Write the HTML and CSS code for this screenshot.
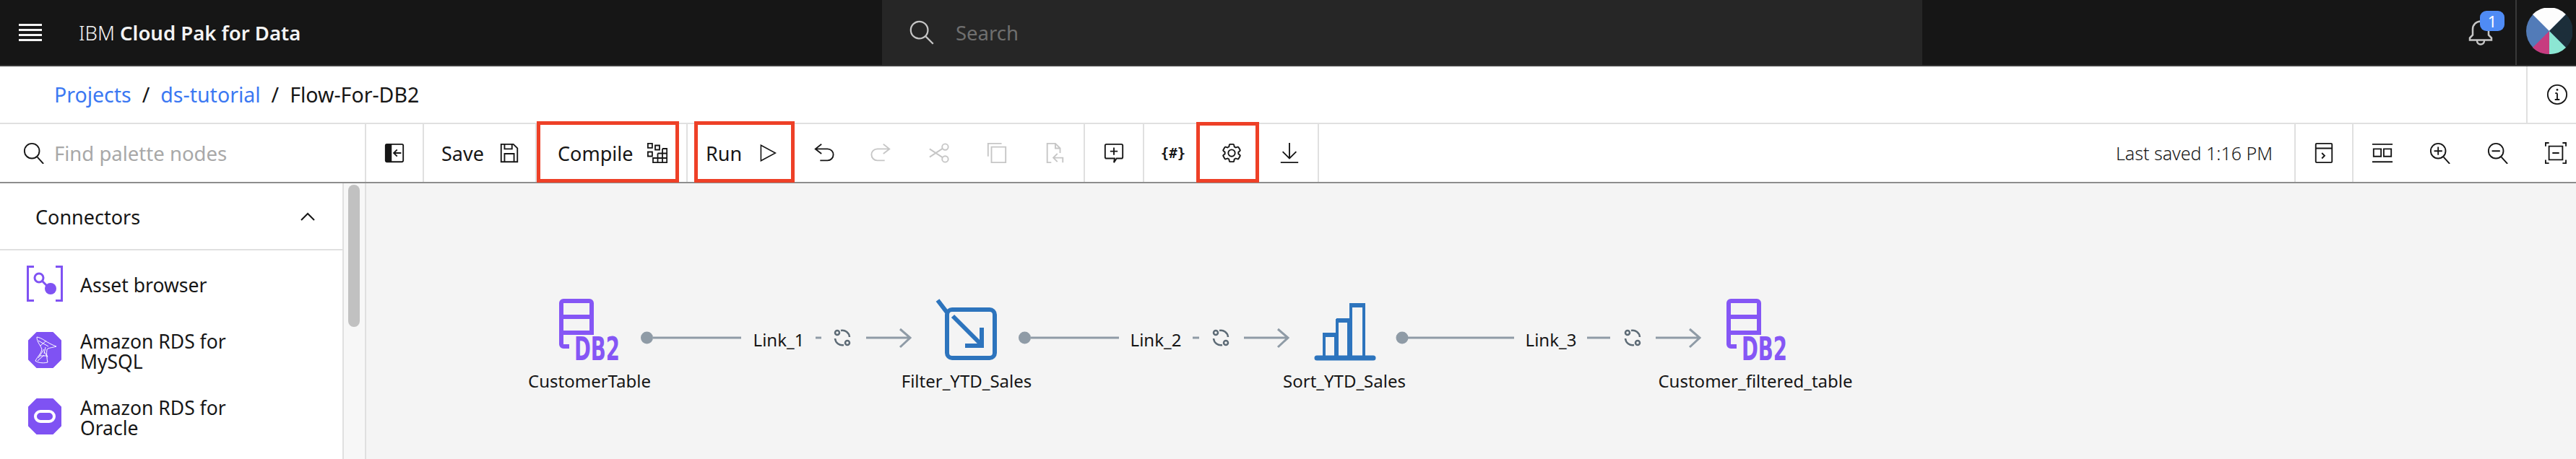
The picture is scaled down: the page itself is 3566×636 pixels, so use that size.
FILE: index.html
```html
<!DOCTYPE html>
<html lang="en">
<head>
  <meta charset="UTF-8" />
  <title>Flow-For-DB2 - IBM Cloud Pak for Data</title>
  <link rel="stylesheet" href="styles.css">
</head>
<body>
  <header class="topbar">
    <div class="brand">
      <div class="burger"><span></span><span></span><span></span><span></span></div>
      <div class="title">IBM <b>Cloud Pak for Data</b></div>
    </div>
    <div class="global-search">
      <svg class="ico ico-lg" viewBox="0 0 32 32"><circle cx="13" cy="13" r="10.5"/><path d="M21 21l9 9"/></svg>
      <span>Search</span>
    </div>
    <div class="top-right">
      <div class="bell">
        <svg class="bell-ico" viewBox="0 0 34 36"><path d="M2 28v-3l4-4v-8a11 11 0 0 1 22 0v8l4 4v3zM12 28v1a5 5 0 0 0 10 0v-1"/></svg>
        <span class="badge">1</span>
      </div>
      <div class="avatar">
        <svg viewBox="0 0 64 64">
          <circle cx="32" cy="32" r="32" fill="#527bb8"/>
          <path d="M32 32L9 9A32 32 0 0 1 55 9z" fill="#fdfdfd"/>
          <path d="M32 32L55 9A32 32 0 0 1 55 55z" fill="#1c2e3a"/>
          <path d="M32 32L55 55A32 32 0 0 1 32 64z" fill="#8ce6d3"/>
          <path d="M32 32V64A32 32 0 0 1 9 55z" fill="#c73c7f"/>
        </svg>
      </div>
    </div>
  </header>

  <nav class="crumbs">
    <div class="crumb-path">
      <a>Projects</a><i>/</i><a>ds-tutorial</a><i>/</i><span>Flow-For-DB2</span>
    </div>
    <div class="crumb-info">
      <svg class="ico" viewBox="0 0 32 32"><circle cx="16" cy="16" r="14"/><path d="M16 14v9M12.500 23.500h7M13 14h3"/><circle class="dot" cx="16" cy="9" r="1.500"/></svg>
    </div>
  </nav>

  <div class="toolbar">
    <div class="palette-search">
      <svg class="ico" viewBox="0 0 32 32"><circle cx="13" cy="13" r="11"/><path d="M21 22l9 10"/></svg>
      <span>Find palette nodes</span>
    </div>
    <button class="slot sep">
      <svg class="ico" viewBox="0 0 32 32"><rect x="3" y="3" width="26" height="26" rx="2"/><path class="solid" d="M3 3h9v26H3z"/><path d="M26 16H16M20 11l-5 5 5 5"/></svg>
    </button>
    <button class="tool save sep">Save
      <svg class="ico" viewBox="0 0 32 32"><path d="M5 3h17l6 6v20H4V3zM9 3v7h11V3M9 29V17h14v12"/></svg>
    </button>
    <button class="tool compile marked">Compile
      <svg class="ico" viewBox="0 0 28 28"><path class="fine" d="M.9.900h6v6h-6zM11 3.500h6v6h-6zM.9 12.500h6v6h-6zM21 8h6.200v19.200H8V21h19.200M21 14.500h6.200M14.500 14.500H27.200M14.500 14.500V27.200M21 8V27.200"/></svg>
    </button>
    <span class="thin-sep"></span>
    <button class="tool run marked">Run
      <svg class="ico" viewBox="0 0 30 30"><path d="M3 1.500L28 15 3 28.500z"/></svg>
    </button>
    <button class="slot">
      <svg class="ico" viewBox="0 0 32 32"><path d="M13 3L4 10l9 7M4 10h18a8 8 0 0 1 0 17H11"/></svg>
    </button>
    <button class="slot off">
      <svg class="ico" viewBox="0 0 32 32"><path d="M19 3l9 7-9 7M28 10H10a8 8 0 0 0 0 17h11"/></svg>
    </button>
    <button class="slot off">
      <svg class="ico" viewBox="0 0 32 32"><circle cx="25" cy="7" r="4.500"/><circle cx="25" cy="25" r="4.500"/><path d="M21 9.500L2 22M21 22.500L2 10"/></svg>
    </button>
    <button class="slot off">
      <svg class="ico" viewBox="0 0 32 32"><path d="M3 21V2h20M8 7h21v23H8z"/></svg>
    </button>
    <button class="slot wide off sep">
      <svg class="ico" viewBox="0 0 32 32"><path d="M11 30H5V2h12l7 7v7M17 2v7h7M28 30v-7H15M20 17l-6 6 6 6"/></svg>
    </button>
    <button class="slot wide sep">
      <svg class="ico" viewBox="0 0 32 32"><path d="M5 3h22a2 2 0 0 1 2 2v17a2 2 0 0 1-2 2h-7l-4 6 1-6H5a2 2 0 0 1-2-2V5a2 2 0 0 1 2-2zM16 8v11M10.500 13.500h11"/></svg>
    </button>
    <button class="slot params">{#}</button>
    <button class="slot wide gear">
      <svg class="ico ico-fill" viewBox="0 0 32 32"><path d="M27,16.760c0-.25,0-.5,0-.76s0-.51,0-.77l1.920-1.680A2,2,0,0,0,29.300,11L26.940,7a2,2,0,0,0-1.730-1,2,2,0,0,0-.64.1l-2.430.82a11.350,11.350,0,0,0-1.310-.75l-.51-2.520a2,2,0,0,0-2-1.610H13.640a2,2,0,0,0-2,1.610l-.51,2.520a11.480,11.480,0,0,0-1.320.75L7.430,6.060A2,2,0,0,0,6.790,6,2,2,0,0,0,5.060,7L2.700,11a2,2,0,0,0,.41,2.510L5,15.240c0,.25,0,.5,0,.76s0,.51,0,.77L3.110,18.450A2,2,0,0,0,2.700,21L5.060,25a2,2,0,0,0,1.730,1,2,2,0,0,0,.64-.1l2.430-.82a11.350,11.350,0,0,0,1.310.75l.51,2.520a2,2,0,0,0,2,1.610h4.720a2,2,0,0,0,2-1.610l.51-2.520a11.480,11.480,0,0,0,1.320-.75l2.420.82a2,2,0,0,0,.64.1,2,2,0,0,0,1.730-1L29.300,21a2,2,0,0,0-.41-2.510ZM25.210,24l-3.430-1.160a8.860,8.860,0,0,1-2.710,1.570L18.360,28H13.640l-.71-3.550a9.360,9.360,0,0,1-2.700-1.570L6.790,24,4.430,20l2.720-2.400a8.900,8.900,0,0,1,0-3.130L4.430,12,6.790,8l3.430,1.160a8.860,8.860,0,0,1,2.710-1.570L13.640,4h4.720l.71,3.550a9.360,9.360,0,0,1,2.700,1.570L25.210,8,27.570,12l-2.720,2.400a8.900,8.900,0,0,1,0,3.130L27.570,20Z"/><path d="M16,22a6,6,0,1,1,6-6A5.940,5.940,0,0,1,16,22Zm0-10a3.910,3.910,0,0,0-4,4,3.910,3.910,0,0,0,4,4,3.910,3.910,0,0,0,4-4A3.910,3.910,0,0,0,16,12Z"/></svg>
    </button>
    <button class="slot sep">
      <svg class="ico" viewBox="0 0 32 32"><path d="M16 1v23M6 14l10 10 10-10M3 30h26"/></svg>
    </button>
    <div class="toolbar-right">
      <span class="saved">Last saved 1:16 PM</span>
      <button class="slot sep lead">
        <svg class="ico" viewBox="0 0 32 32"><rect x="4" y="2" width="24" height="28" rx="1.500"/><path d="M4 9h24M13 16l4 4-4 4"/></svg>
      </button>
      <button class="slot">
        <svg class="ico" viewBox="0 0 32 32"><path d="M1 3h30M1 29h30M3 10h11v11H3zM18 10h11v11H18z"/></svg>
      </button>
      <button class="slot">
        <svg class="ico" viewBox="0 0 32 32"><circle cx="13" cy="13" r="11"/><path d="M21 22l9 10M13 7v12M7 13h12"/></svg>
      </button>
      <button class="slot">
        <svg class="ico" viewBox="0 0 32 32"><circle cx="13" cy="13" r="11"/><path d="M21 22l9 10M7 13h12"/></svg>
      </button>
      <button class="slot">
        <svg class="ico" viewBox="0 0 32 32"><path d="M1 6V1h5M26 1h5v5M1 26v5h5M26 31h5v-5M6 6h20v20H6zM11 16h10"/></svg>
      </button>
    </div>
  </div>

  <main class="workspace">
    <aside class="palette">
      <div class="palette-head">
        <span>Connectors</span>
        <svg class="chev" viewBox="0 0 20 12"><path d="M1 11l9-9 9 9"/></svg>
      </div>
      <div class="palette-item">
        <svg class="node-ico" viewBox="0 0 50 50">
          <path class="bracket" d="M10 1.500H1.500v47H10M40 1.500h8.500v47H40"/>
          <circle class="bracket" cx="17" cy="17" r="6"/>
          <path class="bracket" d="M21 21l9 9"/>
          <circle cx="33" cy="32" r="8"/>
        </svg>
        <span>Asset browser</span>
      </div>
      <div class="palette-item">
        <svg class="node-ico" viewBox="0 0 50 50">
          <path d="M14 1h22l11 11v26L36 49H14L3 38V12z" stroke="#7f52f3" stroke-width="2" stroke-linejoin="round"/>
          <path class="mesh" d="M14 7c8 1 13 8 27 13-7 2-11 2-13 4-1 6 0 14 1 18-7 2-15 0-17-2 3-6 8-10 9-16-2-6-7-10-7-17zM16 12l14 8M19 19l8-7M24 24l-8 12M24 27l5 8M18 33l11 0M26 21l-2 9M15 40l9-8"/>
        </svg>
        <span>Amazon RDS for MySQL</span>
      </div>
      <div class="palette-item">
        <svg class="node-ico" viewBox="0 0 50 50">
          <path d="M14 1h22l11 11v26L36 49H14L3 38V12z" stroke="#7f52f3" stroke-width="2" stroke-linejoin="round"/>
          <rect class="ring" x="12" y="18" width="26" height="14" rx="7"/>
        </svg>
        <span>Amazon RDS for Oracle</span>
      </div>
    </aside>
    <div class="scroll-track"><div class="scroll-thumb"></div></div>

    <section class="canvas">
      <svg class="flow" viewBox="507 254 3059 382">
        <defs>
          <g id="db2">
            <path class="db2-table" d="M788 480h-8a3 3 0 0 1-3-3V420a3 3 0 0 1 3-3h36a3 3 0 0 1 3 3v41H777M777 439h42"/>
            <text class="db2-mark" x="795" y="499" textLength="63" lengthAdjust="spacingAndGlyphs">DB2</text>
          </g>
          <g id="spin" class="spin">
            <path d="M-2-10A10 10 0 0 1 10-1M2 10A10 10 0 0 1-10 1"/>
            <circle cx="-7" cy="-7" r="3"/>
            <circle cx="7" cy="7" r="3"/>
          </g>
        </defs>

        <use href="#db2"/>
        <use href="#db2" x="1616"/>

        <g class="stage">
          <rect x="1311" y="429" width="66" height="67" rx="7"/>
          <path d="M1298 416l13 17M1319 438l38 38M1359 454v25h-23"/>
        </g>
        <g class="stage bars">
          <path d="M1833 496v-32h16v32M1851 496v-52h16v52M1870 496v-74h18v74"/>
          <path class="cap" d="M1831 464h20M1850 444h19M1868 423h22"/>
          <path class="base" d="M1823 496h78"/>
        </g>

        <g class="link">
          <circle cx="895.500" cy="468" r="8.500"/>
          <path d="M904 468h122M1129 468h8M1199 468h60M1246 456l14 12-14 13"/>
          <text x="1078" y="480">Link_1</text>
          <use href="#spin" x="1166" y="468"/>
        </g>
        <g class="link">
          <circle cx="1418.500" cy="468" r="8.500"/>
          <path d="M1427 468h122M1651 468h9M1722 468h60M1769 456l14 12-14 13"/>
          <text x="1600" y="480">Link_2</text>
          <use href="#spin" x="1690" y="468"/>
        </g>
        <g class="link">
          <circle cx="1941" cy="468" r="8.500"/>
          <path d="M1949 468h147M2197 468h32M2292 468h60M2339 456l14 12-14 13"/>
          <text x="2147" y="480">Link_3</text>
          <use href="#spin" x="2260" y="468"/>
        </g>

        <text class="node-label" x="816" y="537">CustomerTable</text>
        <text class="node-label" x="1338" y="537">Filter_YTD_Sales</text>
        <text class="node-label" x="1861" y="537">Sort_YTD_Sales</text>
        <text class="node-label" x="2430" y="537">Customer_filtered_table</text>
      </svg>
    </section>
  </main>
</body>
</html>
```

FILE: styles.css
```css
* {
  box-sizing: border-box;
}
body {
  margin: 0;
  height: 100vh;
  overflow: hidden;
  font-family: "Noto Sans", sans-serif;
  font-size: 27px;
  color: #161616;
  background: #fff;
  display: flex;
  flex-direction: column;
}
button {
  font: inherit;
  color: inherit;
  background: none;
  border: none;
  padding: 0;
}
.ico {
  width: 30px;
  height: 30px;
  fill: none;
  stroke: currentColor;
  stroke-width: 2;
  flex: none;
}
.ico-lg {
  width: 36px;
  height: 36px;
}
.ico-fill {
  fill: currentColor;
  stroke: none;
}
.ico .solid,
.ico .dot {
  fill: currentColor;
  stroke: none;
}
.ico .fine {
  stroke-width: 1.800;
}

/* top bar */
.topbar {
  flex: none;
  height: 92px;
  background: #161616;
  border-bottom: 2px solid #393939;
  display: grid;
  grid-template-columns: 1221px 1440px 1fr;
  color: #f4f4f4;
}
.brand {
  display: flex;
  align-items: center;
  padding-left: 26px;
  gap: 51px;
}
.burger {
  width: 32px;
  display: flex;
  flex-direction: column;
  gap: 4px;
}
.burger span {
  height: 3px;
  background: #f4f4f4;
}
.title {
  font-weight: 300;
  font-size: 27.500px;
}
.title b {
  font-weight: 600;
}
.global-search {
  background: #262626;
  display: flex;
  align-items: center;
  padding-left: 37px;
  gap: 29px;
  color: #c6c6c6;
  font-size: 27.500px;
}
.global-search span {
  color: #6f6f6f;
}
.top-right {
  display: flex;
  justify-content: flex-end;
}
.bell {
  position: relative;
  width: 84px;
  padding: 27px 0 0 19px;
}
.bell-ico {
  display: block;
  width: 34px;
  height: 37px;
  fill: none;
  stroke: #c6c6c6;
  stroke-width: 2.500;
}
.badge {
  position: absolute;
  top: 15px;
  left: 35px;
  width: 34px;
  height: 28px;
  border-radius: 9px;
  background: #4f8bf5;
  color: #fff;
  font-size: 22px;
  line-height: 28px;
  text-align: center;
}
.avatar {
  width: 84px;
  border-left: 2px solid #393939;
  padding: 11px 0 0 13px;
}
.avatar svg {
  display: block;
  width: 64px;
  height: 64px;
}

/* breadcrumb */
.crumbs {
  flex: none;
  height: 80px;
  border-bottom: 2px solid #e0e0e0;
  display: flex;
  justify-content: space-between;
}
.crumb-path {
  padding-left: 75px;
  display: flex;
  align-items: center;
  font-size: 28.500px;
}
.crumb-path a {
  color: #3b78f2;
}
.crumb-path i {
  font-style: normal;
  margin: 0 15px;
}
.crumb-info {
  width: 69px;
  border-left: 2px solid #e0e0e0;
  display: flex;
  align-items: center;
  padding-left: 26px;
}

/* toolbar */
.toolbar {
  flex: none;
  height: 82px;
  border-bottom: 2px solid #8d8d8d;
  display: flex;
}
.palette-search {
  width: 507px;
  border-right: 2px solid #e0e0e0;
  display: flex;
  align-items: center;
  padding-left: 32px;
  gap: 13px;
  color: #161616;
  font-size: 27.500px;
}
.palette-search span {
  color: #a8a8a8;
}
.slot {
  width: 80px;
  display: flex;
  align-items: center;
  justify-content: center;
  flex: none;
}
.wide {
  width: 82px;
}
.sep {
  border-right: 2px solid #e0e0e0;
}
.off {
  color: #c6c6c6;
}
.tool {
  display: flex;
  align-items: center;
  position: relative;
}
.save {
  width: 156px;
  padding-left: 24px;
  gap: 20px;
}
.compile {
  width: 197px;
  padding-left: 29px;
  gap: 20px;
}
.compile .ico {
  width: 28px;
  height: 28px;
}
.thin-sep {
  width: 2px;
  margin: 0 9px 0 10px;
  background: #e0e0e0;
}
.run {
  width: 139px;
  padding-left: 16px;
  gap: 24px;
}
.run .ico {
  width: 24px;
  height: 24px;
}
.marked::after {
  content: "";
  position: absolute;
  inset: -4px 0 -1px;
  border: 5px solid #ee4027;
}
.params {
  font-family: "DejaVu Sans Mono", monospace;
  font-weight: 700;
  font-size: 19px;
}
.gear {
  position: relative;
}
.gear::after {
  content: "";
  position: absolute;
  inset: -3px 3px -1px -8px;
  border: 5px solid #ee4027;
}
.toolbar-right {
  margin-left: auto;
  margin-right: -12px;
  display: flex;
}
.saved {
  align-self: center;
  margin-right: 30px;
  font-weight: 300;
  font-size: 25px;
}
.lead {
  border-left: 2px solid #e0e0e0;
  width: 82px;
}

/* palette */
.workspace {
  flex: 1;
  display: flex;
  min-height: 0;
}
.palette {
  width: 476px;
  flex: none;
  border-right: 2px solid #e0e0e0;
}
.palette-head {
  height: 93px;
  padding: 0 38px 0 49px;
  border-bottom: 2px solid #e0e0e0;
  display: flex;
  align-items: center;
  justify-content: space-between;
}
.palette-head span {
  padding-top: 2px;
}
.chev {
  width: 20px;
  height: 12px;
  fill: none;
  stroke: #161616;
  stroke-width: 2;
}
.palette-item {
  height: 92px;
  padding-left: 37px;
  display: flex;
  align-items: center;
  gap: 24px;
  line-height: 28px;
  font-size: 26.500px;
}
.palette-item span {
  max-width: 250px;
  padding-top: 3px;
}
.node-ico {
  width: 50px;
  height: 50px;
  flex: none;
  fill: #7f52f3;
}
.node-ico .bracket {
  fill: none;
  stroke: #7f52f3;
  stroke-width: 3;
}
.node-ico .mesh {
  fill: none;
  stroke: #fff;
  stroke-width: 1;
}
.node-ico .ring {
  fill: none;
  stroke: #fff;
  stroke-width: 4;
}
.scroll-track {
  width: 31px;
  flex: none;
  background: #f7f7f7;
  border-right: 2px solid #e0e0e0;
  padding: 2px 0 0 6px;
}
.scroll-thumb {
  width: 16px;
  height: 197px;
  border-radius: 8px;
  background: #c1c1c1;
}

/* flow canvas */
.canvas {
  flex: 1;
  background: #f4f4f4;
}
.flow {
  display: block;
  width: 100%;
  height: 100%;
  font-family: "Noto Sans", sans-serif;
  font-size: 24px;
}
.db2-table {
  fill: none;
  stroke: #8556f5;
  stroke-width: 6;
}
.db2-mark {
  fill: #8556f5;
  font-family: "DejaVu Sans", sans-serif;
  font-weight: 700;
  font-size: 44px;
}
.stage {
  fill: none;
  stroke: #2d74bd;
  stroke-width: 6;
}
.bars {
  stroke-width: 4;
}
.bars .cap {
  stroke-width: 6;
}
.bars .base {
  stroke-width: 7;
  stroke-linecap: round;
}
.link path {
  fill: none;
  stroke: #8f9ba6;
  stroke-width: 3;
}
.link > circle {
  fill: #8f9ba6;
}
.link text {
  fill: #161616;
  text-anchor: middle;
}
.spin path,
.spin circle {
  fill: none;
  stroke: #5d6b76;
  stroke-width: 2.500;
}
.node-label {
  fill: #161616;
  text-anchor: middle;
}
```
